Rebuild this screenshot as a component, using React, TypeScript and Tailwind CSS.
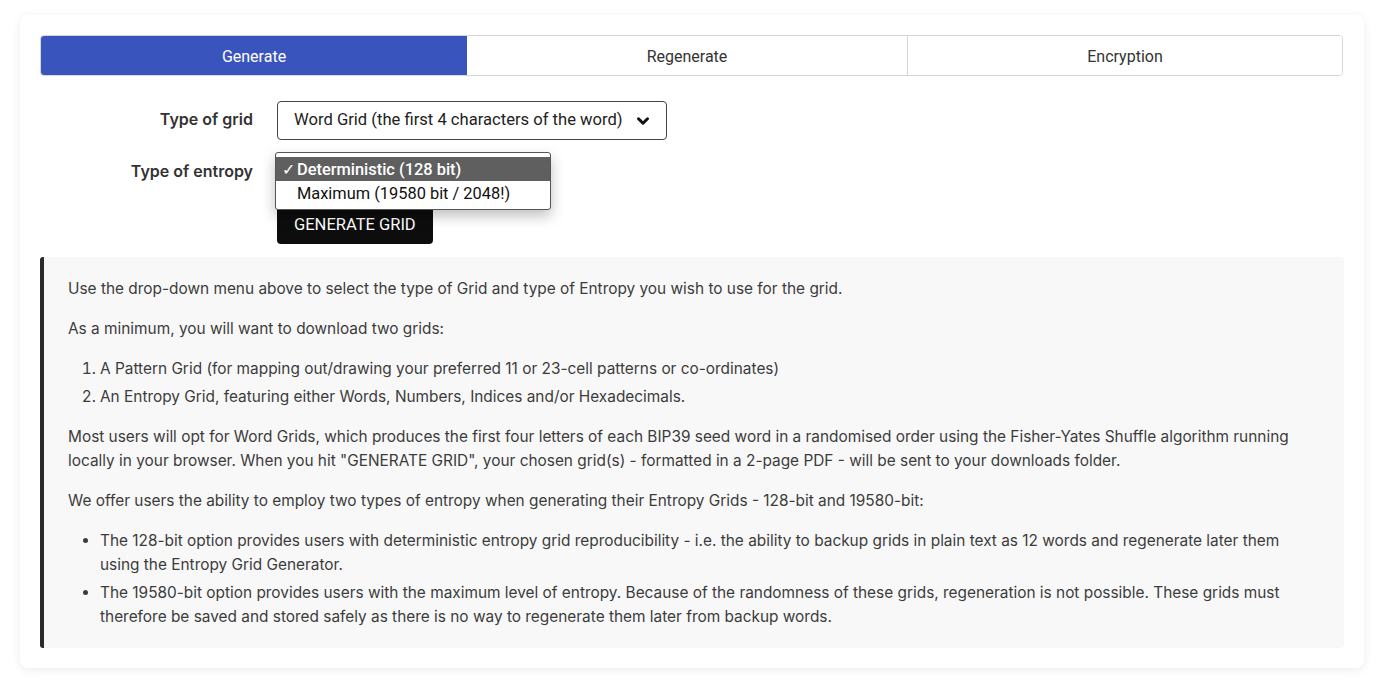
import { ChevronDown } from "lucide-react";

const tabs = [
  { label: "Generate", width: "w-[426px]", active: true },
  { label: "Regenerate", width: "w-[440px]", active: false },
  { label: "Encryption", width: "flex-1", active: false },
];

export default function App() {
  return (
    <div className="min-h-screen bg-white pt-[15px] pl-5 font-['Inter',sans-serif]">
      <div className="w-[1344px] rounded-lg bg-white p-5 shadow-[0_2px_10px_rgba(0,0,0,0.08)]">
        {/* tabs */}
        <div className="flex h-[41px] w-[1303px] rounded border border-[#d6d6d6] overflow-hidden">
          {tabs.map((t, i) => (
            <div
              key={t.label}
              className={`${t.width} flex items-center justify-center pt-[2px] font-['Roboto',sans-serif] text-[16px] ${
                t.active
                  ? "bg-[#3a54bd] text-white"
                  : "bg-white text-[#333]"
              } ${i === 2 ? "border-l border-[#d6d6d6]" : ""}`}
            >
              {t.label}
            </div>
          ))}
        </div>

        {/* form */}
        <div className="mt-[25px] flex flex-col">
          <div className="flex items-start">
            <div className="w-[213px] pt-[6px] text-right text-[16px] font-semibold text-[#333]">
              Type of grid
            </div>
            <div className="ml-6 flex h-[39px] w-[390px] items-center justify-between rounded border border-[#444] pl-4 pr-[14px] font-['Roboto',sans-serif] text-[16.6px] text-[#222]">
              <span>Word Grid (the first 4 characters of the word)</span>
              <ChevronDown size={18} strokeWidth={4} className="text-[#111]" />
            </div>
          </div>

          <div className="mt-3 flex items-start">
            <div className="w-[213px] pt-[7px] text-right text-[16px] font-semibold text-[#333]">
              Type of entropy
            </div>
            <div className="relative ml-6">
              {/* select box, covered by its open menu */}
              <div className="h-[39px] w-[270px] rounded border border-[#444]" />
              <div className="absolute left-[-2px] top-[0px] z-10 w-[276px] rounded-[3px] border border-[#555] bg-white pt-[4px] pb-[4px] shadow-[0_6px_14px_rgba(0,0,0,0.25)] font-['Roboto',sans-serif] text-[16.4px]">
                <div className="flex h-[24px] items-center bg-[#5f5f5f] pl-[6px] pt-[2px] font-medium text-white">
                  <span className="w-[15px] text-[16px] leading-none">✓</span>
                  <span>Deterministic (128 bit)</span>
                </div>
                <div className="flex h-[24px] items-center pl-[21px] pt-[2px] text-[#111]">
                  Maximum (19580 bit / 2048!)
                </div>
              </div>
            </div>
          </div>

          <div className="mt-[14px] ml-[237px]">
            <button className="h-[39px] rounded bg-[#0d0d0d] px-[17px] pt-[2px] font-['Roboto',sans-serif] text-[16.5px] uppercase text-white">
              Generate Grid
            </button>
          </div>
        </div>

        {/* info box */}
        <div className="mt-[13px] rounded-r rounded-l-[3px] border-l-4 border-[#2a2a2a] bg-[#f8f8f8] pl-6 pr-6 pt-5 pb-[19px] text-[15.4px] leading-6 text-[#3c3c3c]">
          <p>
            Use the drop-down menu above to select the type of Grid and type of Entropy you wish to use for the grid.
          </p>
          <p className="mt-4">As a minimum, you will want to download two grids:</p>
          <ol className="mt-4 list-decimal pl-8 space-y-1">
            <li>A Pattern Grid (for mapping out/drawing your preferred 11 or 23-cell patterns or co-ordinates)</li>
            <li>An Entropy Grid, featuring either Words, Numbers, Indices and/or Hexadecimals.</li>
          </ol>
          <p className="mt-4">
            Most users will opt for Word Grids, which produces the first four letters of each BIP39 seed word in a randomised order using the Fisher-Yates Shuffle algorithm running locally in your browser. When you hit "GENERATE GRID", your chosen grid(s) - formatted in a 2-page PDF - will be sent to your downloads folder.
          </p>
          <p className="mt-4">
            We offer users the ability to employ two types of entropy when generating their Entropy Grids - 128-bit and 19580-bit:
          </p>
          <ul className="mt-4 list-disc pl-8 space-y-1">
            <li>
              The 128-bit option provides users with deterministic entropy grid reproducibility - i.e. the ability to backup grids in plain text as 12 words and regenerate later them using the Entropy Grid Generator.
            </li>
            <li>
              The 19580-bit option provides users with the maximum level of entropy. Because of the randomness of these grids, regeneration is not possible. These grids must therefore be saved and stored safely as there is no way to regenerate them later from backup words.
            </li>
          </ul>
        </div>
      </div>
    </div>
  );
}
